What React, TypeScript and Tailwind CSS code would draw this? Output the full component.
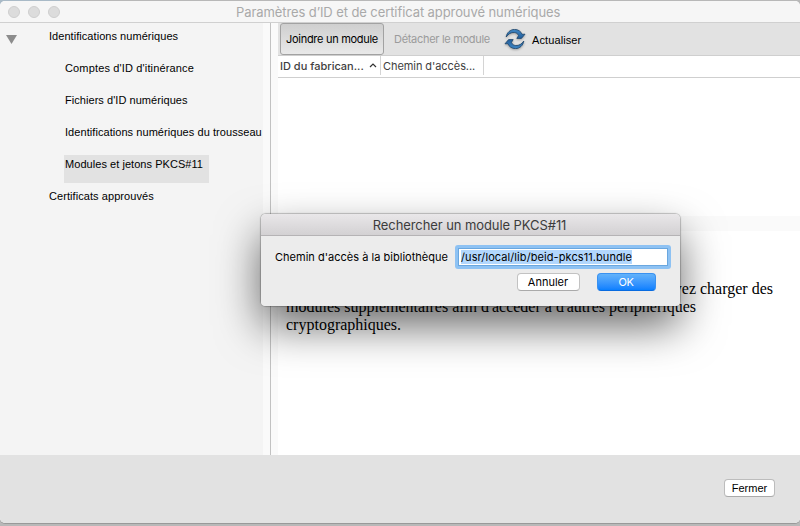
import type { ReactNode } from 'react';

function TreeItem({ label, className = '' }: { label: string; className?: string }) {
  return (
    <div className="flex h-8 items-start">
      <span className={`block h-7 whitespace-nowrap pt-px text-[11px] leading-[16px] text-black ${className}`}>{label}</span>
    </div>
  );
}

function Button({ children, className }: { children: ReactNode; className: string }) {
  return (
    <button className={`flex h-[18px] items-center justify-center rounded-[4px] leading-none whitespace-nowrap ${className}`}>
      {children}
    </button>
  );
}

function RefreshIcon() {
  return (
    <svg width="22" height="22" viewBox="0 0 22 22" className="shrink-0 drop-shadow-[0_1px_1px_rgba(0,0,0,0.3)]">
      <defs>
        <linearGradient id="blue" x1="0" y1="0" x2="0" y2="1">
          <stop offset="0" stopColor="#3f86c4" />
          <stop offset="1" stopColor="#235f9c" />
        </linearGradient>
      </defs>
      <path
        id="arrow"
        d="M2.200 9C2.800 4.600 6.300 1.400 10.500 1.400c3.600 0 6.500 2 7.600 4.900L21 6.200 17.400 10.400H12.800L14.600 7.600C13.800 5.600 12.300 4.700 10.300 4.500 7 4.200 4.200 6 2.200 9Z"
        fill="url(#blue)"
        stroke="#1b4269"
        strokeWidth="0.8"
        strokeLinejoin="round"
      />
      <use href="#arrow" transform="rotate(180 11 11)" />
    </svg>
  );
}

function Dialog() {
  return (
    <div className="absolute left-[261px] top-[214px] flex h-[92px] w-[419px] flex-col overflow-hidden rounded-t-[5px] rounded-b-[4px] bg-[#ececec]">
      <div className="flex h-[22px] shrink-0 items-center justify-center border-b border-[#b5b3b5] bg-linear-to-b from-[#e9e7e9] to-[#d3d1d3] pt-[2px] pr-[2px] text-[13px] text-[#3c3c3c]">
        <span className="whitespace-nowrap tracking-[-0.08px]">Rechercher un module PKCS#11</span>
      </div>
      <div className="flex h-[23px] pl-[14px]">
        <span className="mt-[13px] w-[180px] shrink-0 whitespace-nowrap text-[11px] leading-4 tracking-[0.02px] text-black">
          Chemin d'accès à la bibliothèque
        </span>
        <div className="mt-[9px] flex h-6 w-[216px] shrink-0 rounded-[3px] bg-[#8ec2f3] p-[3px]">
          <div className="flex h-[18px] w-[210px] items-center border border-[#6aa7df] bg-white pl-[2px]">
            <span className="flex h-[14px] w-[171px] items-center whitespace-nowrap bg-[#b2d7fd] pt-px text-[11px] tracking-[0.08px] text-black">
              /usr/local/lib/beid-pkcs11.bundle
            </span>
          </div>
        </div>
      </div>
      <div className="mt-[14px] flex gap-[17px] pl-[256px]">
        <Button className="w-[63px] border border-[#c2c2c2] border-b-[#aaa] bg-white pr-px text-[11px] text-black">Annuler</Button>
        <Button className="w-[59px] border border-[#3991f0] border-b-[#086be0] bg-linear-to-b from-[#62b2fa] to-[#087fff] pr-px text-[11px] tracking-[-0.3px] text-white">OK</Button>
      </div>
    </div>
  );
}

export default function App() {
  return (
    <div className="relative flex h-[526px] w-[800px] flex-col overflow-hidden bg-[#b8b8b8] font-['Inter','Liberation_Sans',sans-serif]">
      <div className="h-[6px] w-[60px] shrink-0 bg-[#a9bac7]" />
      <div className="-mt-[5px] flex h-[522px] shrink-0 flex-col overflow-hidden rounded-[5px] bg-white shadow-[0_1px_0_#999]">
        <div className="flex h-[22px] shrink-0 items-center border-b border-[#d0d0d0] bg-[#f6f6f6] pl-2">
          <div className="flex gap-2">
            <i className="size-3 rounded-full border border-[#cecece] bg-[#dcdcdc]" />
            <i className="size-3 rounded-full border border-[#cecece] bg-[#dcdcdc]" />
            <i className="size-3 rounded-full border border-[#cecece] bg-[#dcdcdc]" />
          </div>
          <span className="ml-[176px] mt-[2px] whitespace-nowrap text-[13px] tracking-[-0.09px] text-[#a9a9a9]">
            Paramètres d’ID et de certificat approuvé numériques
          </span>
        </div>

        <div className="flex h-[432px] shrink-0">
          <aside className="flex w-[263px] shrink-0 bg-[#f4f4f4] font-['Liberation_Sans',sans-serif]">
            <svg width="12" height="9" viewBox="0 0 12 9" className="ml-[6px] mt-[12px] shrink-0">
              <path d="M0 0h11L5.500 9Z" fill="#8c8c8c" />
            </svg>
            <div className="ml-[31px] flex flex-col pt-[4px]">
              <TreeItem label="Identifications numériques" className="tracking-[0.05px]" />
              <div className="pl-[15px]">
                <TreeItem label="Comptes d'ID d'itinérance" className="pl-px tracking-[0.15px]" />
                <TreeItem label="Fichiers d'ID numériques" className="pl-px tracking-[0.05px]" />
                <TreeItem label="Identifications numériques du trousseau" className="pl-px tracking-[0.06px]" />
                <TreeItem label="Modules et jetons PKCS#11" className="w-[145px] bg-[#e2e2e2] pl-px tracking-[0.05px]" />
              </div>
              <TreeItem label="Certificats approuvés" className="tracking-[0.07px]" />
            </div>
          </aside>
          <div className="w-[15px] shrink-0 border-x-[7px] border-[#fafafa] bg-[#c2c2c2]" />
          <main className="flex w-[522px] flex-col">
            <div className="flex h-[33px] shrink-0 items-center border-b border-[#cfcfcf] bg-[#e2e2e2] pl-[2px] text-[11px]">
              <button className="h-8 w-[104px] shrink-0 whitespace-nowrap rounded-[3px] border border-[#a2a2a2] bg-linear-to-b from-[#cfcfcf] to-[#e9e9e9] tracking-[-0.3px] text-black">
                Joindre un module
              </button>
              <span className="ml-[10px] w-[110px] shrink-0 whitespace-nowrap tracking-[-0.3px] text-[#9b9b9b]">Détacher le module</span>
              <RefreshIcon />
              <span className="ml-[6px] mt-[2px] font-['Liberation_Sans',sans-serif] tracking-[0.1px] text-black">Actualiser</span>
            </div>
            <div className="flex h-[22px] shrink-0 border-b border-[#cfcfcf] text-[11px] leading-[20px] text-[#404040]">
              <span className="mb-[2px] flex w-[103px] items-center justify-between border-r border-[#d4d4d4] pl-[2px] pr-[3px] font-medium">
                <span className="whitespace-nowrap">ID du fabrican...</span>
                <svg width="8" height="5" viewBox="0 0 8 5">
                  <path d="m1 4 3-3 3 3" fill="none" stroke="#333" strokeWidth="1.2" />
                </svg>
              </span>
              <span className="mb-[2px] w-[103px] whitespace-nowrap border-r border-[#d4d4d4] pl-[2px] tracking-[-0.07px]">Chemin d'accès...</span>
            </div>
            <div className="h-[138px] shrink-0" />
            <div className="h-[15px] shrink-0 bg-[#fafafa]" />
            <div className="pl-2 pt-[49px] font-['Liberation_Serif',serif] text-[16px] leading-[18px] text-black">
              <p className="w-[487px] whitespace-nowrap text-right">pouvez charger des</p>
              <p className="whitespace-nowrap">modules supplémentaires afin d'accéder à d'autres périphériques</p>
              <p className="whitespace-nowrap">cryptographiques.</p>
            </div>
          </main>
        </div>

        <footer className="flex h-[68px] shrink-0 justify-end bg-[#e2e2e2] pr-[25px] pt-6 font-['Liberation_Sans',sans-serif]">
          <Button className="w-[51px] border border-[#bcbcbc] border-b-[#aaa] bg-white text-[11px] text-black">Fermer</Button>
        </footer>
      </div>

      <div className="absolute inset-x-0 top-[23px] h-[432px] overflow-hidden">
        <div className="absolute left-[261px] top-[191px] h-[92px] w-[419px] rounded-[5px] shadow-[0_0_1px_1px_rgba(0,0,0,0.22),0_20px_44px_0px_rgba(0,0,0,0.6)]" />
      </div>
      <Dialog />
    </div>
  );
}
